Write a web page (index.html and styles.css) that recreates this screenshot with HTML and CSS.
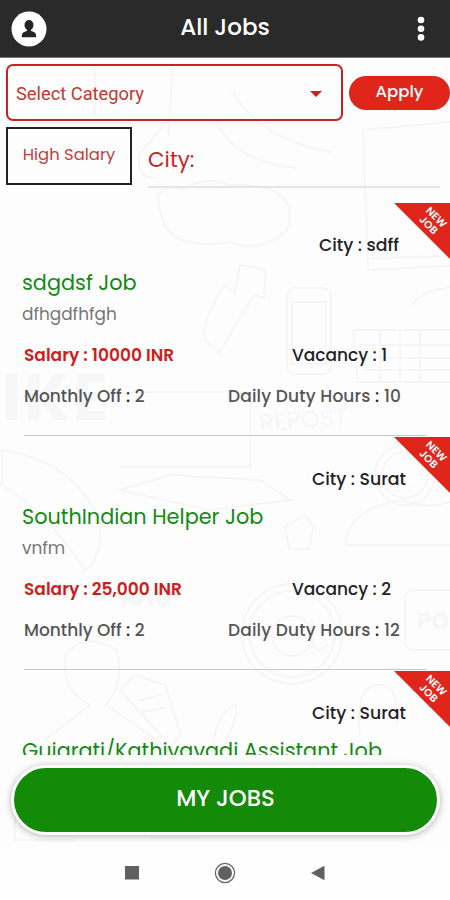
FILE: index.html
```html
<!DOCTYPE html>
<html lang="en">
<head>
    <meta charset="UTF-8">
    <meta name="viewport" content="width=device-width, initial-scale=1.0">
    <title>All Jobs</title>
    <link rel="stylesheet" href="styles.css">
</head>
<body>
<div class="app">
    <!-- faint pencil doodles behind the page -->
    <svg class="doodles" width="450" height="790" viewBox="0 58 450 790" aria-hidden="true">
        <g fill="none" stroke="#f6f6f6" stroke-width="2" stroke-linecap="round">
            <path d="M95 70v45M172 70l-3 65M170 118l-30 35q-5 25 15 25M215 120q20 42 80 48M232 90q25 48 98 62"/>
            <path d="M158 195q10-12 25-5q20-15 45-5q50-2 60 20q8 25-15 35q-20 12-42 2q-25 5-50-2q-22-10-23-45z"/>
            <path d="M205 340q-5-18 20-55l10 8l5-28l26 5l-2 28l-10-3l-35 58z"/>
            <path d="M363 130l87-8M363 130l5 140l82-4M370 258l80-2M412 305q10-14 38-18"/>
            <rect x="287" y="288" width="44" height="86" rx="8"/>
            <path d="M292 302h34v62h-34z"/>
            <path d="M353 330h97M353 330l5 52h92M360 345h90M360 358h90M365 370h85M380 332v48M400 332v48M420 332v48"/>
            <path d="M120 392h130v75h-130M120 490l50-15l90 5l30 20l-80 10z"/>
            <path d="M2 450q70 10 98 70q2 40-15 50q-40-60-83-85z"/>
            <circle cx="405" cy="475" r="30"/>
            <circle cx="405" cy="475" r="23"/>
            <path d="M346 545q0-35 55-45q30 10 49 2M346 545h104M305 515l8 12l-4 22h-20l-4-22z"/>
            <circle cx="292" cy="634" r="50"/>
            <circle cx="292" cy="634" r="43"/>
            <circle cx="292" cy="636" r="20"/>
            <path d="M312 622v18q4 18 16 4"/>
            <rect x="405" y="590" width="60" height="60" rx="8"/>
            <path d="M45 740l45-35q-30-15-24-50q20-25 50-5q10 30-10 55l70 48M120 690l15-15l30 10l16 50l-10 12zM140 700l20-5M142 712l22-4"/>
            <path d="M225 745q15-35 10-40q-20 10-22 42M360 735q-5-45 15-50q25-5 22 40M15 780v60h60M150 838h50"/>
        </g>
        <g class="doodle-text">
            <text x="2" y="420" font-size="66" textLength="106">IKE</text>
            <text class="thin" x="260" y="431" font-size="24" textLength="88" transform="rotate(-4 260 431)">REPOST</text>
            <text x="118" y="606" font-size="26">1010</text>
            <text x="417" y="629" font-size="23">POST</text>
        </g>
    </svg>

    <header class="topbar">
        <svg class="avatar" width="36" height="36" viewBox="0 0 36 36">
            <circle cx="18" cy="18" r="17.500" fill="#fff"/>
            <path d="M18 9a4.500 5 0 0 1 4.500 5c0 2.300-1 3.700-2.500 4.800v1.200c3 .7 5.200 1.800 5.200 5.300v1H10.800v-1c0-3.500 2.200-4.600 5.200-5.300v-1.200c-1.500-1.100-2.500-2.500-2.500-4.800A4.500 5 0 0 1 18 9z" fill="#242424"/>
        </svg>
        <h1>All Jobs</h1>
        <svg class="dots" width="8" height="26" viewBox="0 0 8 26" fill="#fff">
            <circle cx="4" cy="4" r="3.300"/>
            <circle cx="4" cy="12.700" r="3.300"/>
            <circle cx="4" cy="21.400" r="3.300"/>
        </svg>
    </header>

    <section class="filters">
        <div class="filter-row">
            <div class="select">
                <span>Select Category</span>
                <i class="caret"></i>
            </div>
            <button class="apply">Apply</button>
        </div>
        <div class="filter-row">
            <button class="high-salary">High Salary</button>
            <div class="city-input">City:</div>
        </div>
    </section>

    <main class="jobs">
        <article class="job">
            <div class="badge"><span>NEW<br>JOB</span></div>
            <div class="city city-short">City : sdff</div>
            <h2>sdgdsf Job</h2>
            <p class="desc">dfhgdfhfgh</p>
            <div class="row">
                <span class="salary">Salary : 10000 INR</span>
                <span class="vacancy">Vacancy : 1</span>
            </div>
            <div class="row muted">
                <span>Monthly Off <b>:</b> 2</span>
                <span class="hours">Daily Duty Hours <b>:</b> 10</span>
            </div>
        </article>
        <article class="job">
            <div class="badge"><span>NEW<br>JOB</span></div>
            <div class="city">City : Surat</div>
            <h2>SouthIndian Helper Job</h2>
            <p class="desc">vnfm</p>
            <div class="row">
                <span class="salary">Salary : 25,000 INR</span>
                <span class="vacancy">Vacancy : 2</span>
            </div>
            <div class="row muted">
                <span>Monthly Off <b>:</b> 2</span>
                <span class="hours">Daily Duty Hours <b>:</b> 12</span>
            </div>
        </article>
        <article class="job">
            <div class="badge"><span>NEW<br>JOB</span></div>
            <div class="city">City : Surat</div>
            <h2>Gujarati/Kathiyavadi Assistant Job</h2>
        </article>
    </main>

    <div class="bottom">
        <button class="my-jobs">MY JOBS</button>
    </div>

    <nav class="navbar">
        <svg width="20" height="24" viewBox="0 0 20 24"><path d="M3 5h14v13.500H3z" fill="#606060"/></svg>
        <svg width="24" height="24" viewBox="0 0 24 24"><circle cx="12" cy="12" r="9.600" fill="none" stroke="#666" stroke-width="1.300"/><circle cx="12" cy="12" r="7" fill="#606060"/></svg>
        <svg width="20" height="24" viewBox="0 0 20 24"><path d="M16.500 4.800v14.400L3 12z" fill="#606060"/></svg>
    </nav>
</div>
</body>
</html>
```

FILE: styles.css
```css
* {
    box-sizing: border-box;
}
body {
    margin: 0;
    font-family: 'Poppins', 'Inter', sans-serif;
    background-color: #fff;
}
button {
    font-family: inherit;
    padding: 0;
}
.app {
    position: relative;
    display: flex;
    flex-direction: column;
    width: 450px;
    height: 900px;
    overflow: hidden;
    background-color: #fdfdfd;
    isolation: isolate;
}
.doodles {
    position: absolute;
    top: 58px;
    left: 0;
    z-index: -1;
}
.doodle-text {
    fill: #f7f7f7;
    font-weight: 700;
}
.thin {
    font-weight: 400;
}
.topbar {
    flex: none;
    display: flex;
    align-items: center;
    justify-content: space-between;
    height: 58px;
    padding: 0 25px 0 11px;
    background-color: #2a2a2a;
    border-bottom: 1px solid #777;
}
.topbar h1 {
    margin: 0 14px 4px 0;
    color: #fff;
    font-size: 23px;
    font-weight: 500;
}
.filters {
    flex: none;
    display: flex;
    flex-direction: column;
    gap: 6px;
    height: 144px;
    padding: 6px 0 0 6px;
}
.filter-row {
    display: flex;
    align-items: center;
}
.filter-row:last-child {
    align-items: flex-start;
}
.select {
    display: flex;
    align-items: center;
    justify-content: space-between;
    width: 337px;
    height: 57px;
    padding: 2px 19px 0 8px;
    border: 2px solid #c92220;
    border-radius: 7px;
    color: #c0392f;
    font-family: Roboto, sans-serif;
    font-size: 18.300px;
}
.caret {
    border-left: 6px solid transparent;
    border-right: 6px solid transparent;
    border-top: 6px solid #d01f1f;
}
.apply {
    width: 101px;
    height: 34px;
    margin-left: 6px;
    padding-bottom: 3px;
    border: 0;
    border-radius: 17px;
    background-color: #e0261a;
    color: #fff;
    font-size: 16.500px;
    font-weight: 500;
}
.high-salary {
    width: 126px;
    height: 58px;
    padding-bottom: 4px;
    border: 2px solid #222;
    background: none;
    color: #c43c3c;
    font-size: 16.400px;
}
.city-input {
    width: 292px;
    height: 61px;
    margin-left: 16px;
    padding-top: 16px;
    border-bottom: 2px solid #e6e6e6;
    color: #c91f1f;
    font-size: 21.500px;
}
.jobs {
    flex: none;
    height: 553px;
    overflow: hidden;
}
.job {
    position: relative;
    height: 234px;
    padding: 31px 0 0 22px;
}
.job::after {
    content: '';
    position: absolute;
    left: 24px;
    right: 24px;
    bottom: 0;
    height: 1px;
    background-color: #c8c8c8;
}
.badge {
    position: absolute;
    z-index: 1;
    top: 1px;
    right: 0;
    width: 56px;
    height: 56px;
    background-color: #e0261a;
    clip-path: polygon(0 0, 100% 0, 100% 100%);
}
.badge span {
    position: absolute;
    left: 26px;
    top: 8px;
    color: #fff;
    font-size: 10.500px;
    font-weight: 600;
    line-height: 10.500px;
    text-align: center;
    transform: rotate(45deg);
}
.city {
    display: flex;
    justify-content: flex-end;
    height: 24px;
    padding-right: 44px;
    color: #222;
    font-size: 17.300px;
    font-weight: 500;
    line-height: 24px;
}
.city-short {
    padding-right: 51px;
}
.job h2 {
    margin: 11px 0 0;
    color: #138a13;
    font-size: 20.800px;
    font-weight: 400;
    line-height: 30px;
}
.desc {
    margin: 3px 0 0;
    color: #777;
    font-size: 16.900px;
    line-height: 26px;
}
.row {
    display: grid;
    grid-template-columns: 204px 1fr;
    height: 24px;
    margin: 16px 0 0 2px;
    color: #222;
    font-size: 17px;
    font-weight: 500;
    line-height: 24px;
}
.salary {
    color: #cc1d1a;
    font-weight: 600;
}
.vacancy {
    padding-left: 64px;
}
.hours {
    letter-spacing: 0.150px;
}
.muted {
    margin-top: 17px;
    color: #555;
}
.muted b {
    color: #222;
    font-weight: 500;
}
.bottom {
    flex: none;
    height: 92px;
    padding: 10px 10px 0 11px;
}
.my-jobs {
    display: block;
    width: 100%;
    height: 70px;
    padding-bottom: 4px;
    border: 3px solid #fff;
    border-radius: 36px;
    background-color: #138a08;
    box-shadow: 0 1px 7px rgba(0, 0, 0, 0.3);
    color: #fff;
    font-size: 22.800px;
    font-weight: 500;
}
.navbar {
    flex: 1;
    display: flex;
    justify-content: center;
    gap: 71px;
    padding-top: 14px;
    background-color: #fefefe;
}
```
